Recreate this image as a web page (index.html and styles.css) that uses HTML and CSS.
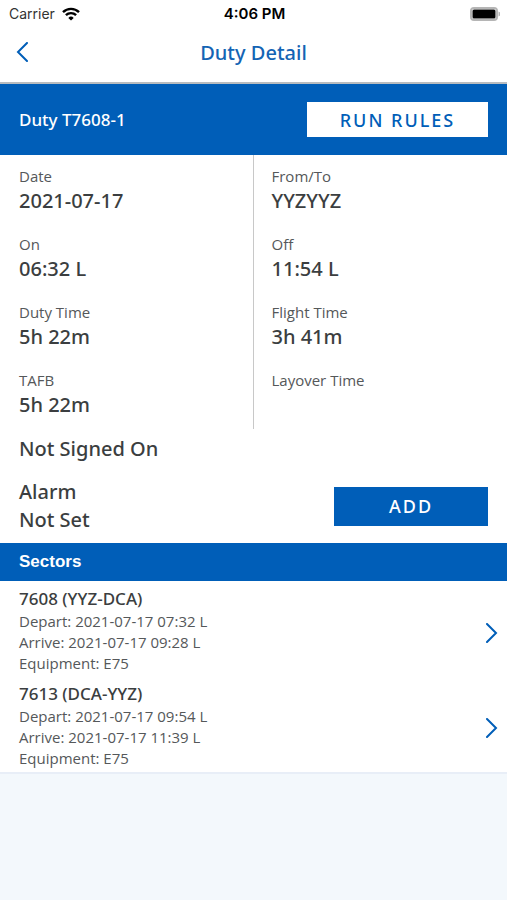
FILE: index.html
```html
<!DOCTYPE html>
<html lang="en">
<head>
    <meta charset="UTF-8">
    <meta name="viewport" content="width=device-width, initial-scale=1.0">
    <title>Duty Detail</title>
    <link rel="stylesheet" href="styles.css">
</head>
<body>
    <div class="status-bar">
        <div class="carrier">
            <span>Carrier</span>
            <svg class="wifi" viewBox="0 0 18 14" aria-hidden="true">
                <path d="M1 5.2a11.4 11.4 0 0 1 16 0" />
                <path d="M3.9 8.2a7.2 7.2 0 0 1 10.2 0" />
                <path class="wifi-dot" d="M9 13.6L6.3 10.9a3.9 3.9 0 0 1 5.4 0z" />
            </svg>
        </div>
        <div class="clock">4:06 PM</div>
        <svg class="battery" viewBox="0 0 30 14" aria-hidden="true">
            <rect class="battery-case" x="1" y="1" width="26" height="12" rx="3" />
            <rect x="2.5" y="2.5" width="23" height="9" rx="1.5" />
            <path class="battery-tip" d="M28.5 4.5a2.6 2.6 0 0 1 0 5z" />
        </svg>
    </div>

    <header class="nav-bar">
        <a href="#" class="back" aria-label="Back">
            <svg viewBox="0 0 12 20"><path d="M11 1L2 10l9 9" /></svg>
        </a>
        <h1>Duty Detail</h1>
    </header>

    <main>
        <div class="duty-bar">
            <h2>Duty T7608-1</h2>
            <button type="button" class="btn btn-light">RUN RULES</button>
        </div>

        <div class="details">
            <dl class="column">
                <div class="field"><dt>Date</dt><dd>2021-07-17</dd></div>
                <div class="field"><dt>On</dt><dd>06:32 L</dd></div>
                <div class="field"><dt>Duty Time</dt><dd>5h 22m</dd></div>
                <div class="field"><dt>TAFB</dt><dd>5h 22m</dd></div>
            </dl>
            <dl class="column">
                <div class="field"><dt>From/To</dt><dd>YYZYYZ</dd></div>
                <div class="field"><dt>Off</dt><dd>11:54 L</dd></div>
                <div class="field"><dt>Flight Time</dt><dd>3h 41m</dd></div>
                <div class="field"><dt>Layover Time</dt><dd></dd></div>
            </dl>
        </div>

        <p class="sign-on">Not Signed On</p>

        <div class="alarm">
            <div>
                <p>Alarm</p>
                <p>Not Set</p>
            </div>
            <button type="button" class="btn btn-primary">ADD</button>
        </div>

        <h2 class="section-title">Sectors</h2>

        <div class="sectors">
            <a href="#" class="sector">
                <div>
                    <h3>7608 (YYZ-DCA)</h3>
                    <p>Depart: 2021-07-17 07:32 L</p>
                    <p>Arrive: 2021-07-17 09:28 L</p>
                    <p>Equipment: E75</p>
                </div>
                <svg viewBox="0 0 12 20" aria-hidden="true"><path d="M1 1l9 9-9 9" /></svg>
            </a>
            <a href="#" class="sector">
                <div>
                    <h3>7613 (DCA-YYZ)</h3>
                    <p>Depart: 2021-07-17 09:54 L</p>
                    <p>Arrive: 2021-07-17 11:39 L</p>
                    <p>Equipment: E75</p>
                </div>
                <svg viewBox="0 0 12 20" aria-hidden="true"><path d="M1 1l9 9-9 9" /></svg>
            </a>
        </div>
    </main>
</body>
</html>
```
FILE: styles.css
```css
* {
    margin: 0;
    padding: 0;
    box-sizing: border-box;
}

body {
    font-family: 'Noto Sans', 'Open Sans', sans-serif;
    background: #f3f8fc;
    color: #3b3e40;
    min-height: 100vh;
}

/* Status bar */
.status-bar {
    display: grid;
    grid-template-columns: 1fr auto 1fr;
    align-items: center;
    height: 27px;
    padding: 0 7px 0 9px;
    background: white;
    color: black;
    font-family: Inter, sans-serif;
    font-size: 14px;
}

.carrier {
    display: flex;
    align-items: center;
    gap: 7px;
    color: #333;
}

.wifi {
    width: 18px;
    height: 14px;
    fill: none;
    stroke: black;
    stroke-width: 2.4;
}

.wifi-dot {
    fill: black;
    stroke: none;
}

.clock {
    font-size: 15px;
    font-weight: 600;
}

.battery {
    width: 30px;
    height: 14px;
    justify-self: end;
}

.battery-case {
    fill: white;
    stroke: #b5b5b5;
    stroke-width: 2;
}

.battery-tip {
    fill: #b5b5b5;
}

/* Header */
.nav-bar {
    display: grid;
    grid-template-columns: 1fr auto 1fr;
    align-items: center;
    height: 57px;
    padding: 0 16px 5px;
    background: white;
    border-bottom: 2px solid #b8bcc0;
}

.back {
    display: block;
    width: 12px;
    height: 20px;
}

.back svg,
.sector svg {
    display: block;
    width: 12px;
    height: 20px;
    fill: none;
    stroke: #005eb8;
    stroke-width: 2;
    stroke-linecap: round;
}

h1 {
    color: #1464b4;
    font-size: 20px;
    font-weight: 500;
}

main {
    background: white;
    border-bottom: 2px solid #e8eef7;
}

.duty-bar {
    display: flex;
    align-items: center;
    justify-content: space-between;
    height: 71px;
    padding: 0 19px;
    background: #005eb8;
    color: white;
}

.duty-bar h2 {
    font-size: 17px;
    font-weight: 500;
}

.btn {
    border: none;
    border-radius: 0;
    font-family: inherit;
    font-size: 18px;
    font-weight: 500;
    letter-spacing: 2px;
    cursor: pointer;
}

.btn-light {
    width: 181px;
    height: 35px;
    background: white;
    color: #005eb8;
}

.btn-primary {
    width: 154px;
    height: 39px;
    background: #005eb8;
    color: white;
}

/* Duty details */
.details {
    display: grid;
    grid-template-columns: 1fr 1fr;
}

.column {
    padding: 10px 19px 0;
}

.column:first-child {
    border-right: 1px solid #c8c8c8;
}

.column + .column {
    padding-left: 18px;
}

.field {
    height: 68px;
}

.column .field:last-child {
    height: 60px;
}

dt,
.sector p {
    font-family: 'Open Sans', sans-serif;
    font-size: 15px;
    color: #55585a;
}

dt {
    line-height: 22px;
}

dd {
    font-size: 20px;
    line-height: 28px;
    font-weight: 500;
}

.sign-on,
.alarm {
    padding: 0 19px;
    font-size: 20px;
    line-height: 28px;
    font-weight: 500;
}

.sign-on {
    padding-top: 6px;
}

.alarm {
    display: flex;
    align-items: center;
    justify-content: space-between;
    padding-top: 15px;
    padding-bottom: 9px;
}

/* Sectors */
.section-title {
    padding: 0 19px;
    background: #005eb8;
    color: white;
    font-family: 'Liberation Sans', sans-serif;
    font-size: 17px;
    line-height: 38px;
}

.sectors {
    padding: 6px 9px 0 19px;
}

.sector {
    display: flex;
    align-items: center;
    justify-content: space-between;
    padding-bottom: 8px;
    color: inherit;
    text-decoration: none;
}

.sector:last-child {
    padding-bottom: 3px;
}

.sector svg {
    margin-top: 4px;
}

h3 {
    font-size: 17px;
    line-height: 24px;
    font-weight: 500;
}

.sector p {
    line-height: 21px;
}
```
